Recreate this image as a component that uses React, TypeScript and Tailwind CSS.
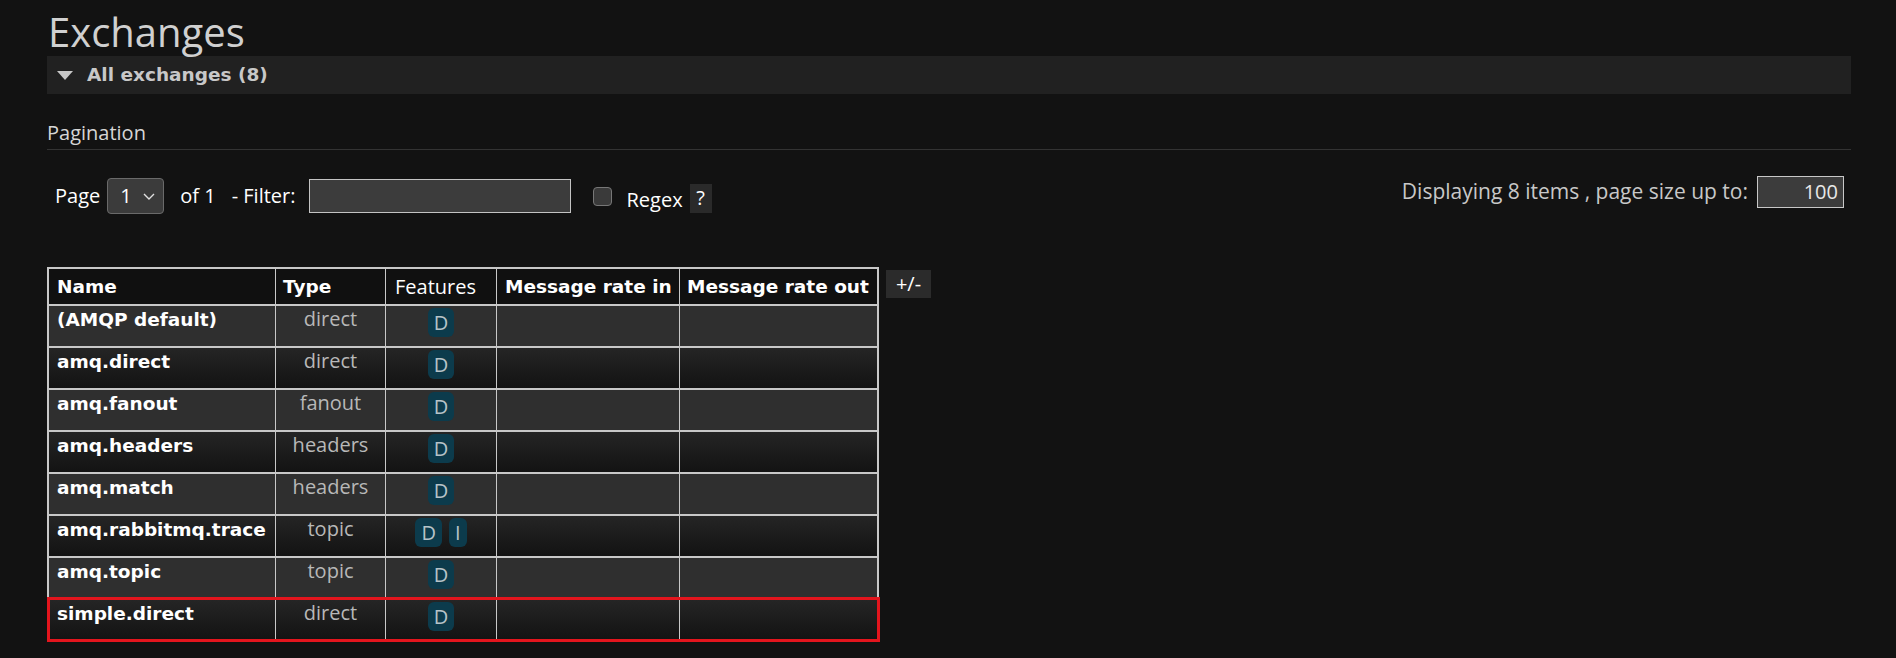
import React from "react";

type Row = { name: string; type: string; f: string[]; highlight?: boolean };

const rows: Row[] = [
  { name: "(AMQP default)", type: "direct", f: ["D"] },
  { name: "amq.direct", type: "direct", f: ["D"] },
  { name: "amq.fanout", type: "fanout", f: ["D"] },
  { name: "amq.headers", type: "headers", f: ["D"] },
  { name: "amq.match", type: "headers", f: ["D"] },
  { name: "amq.rabbitmq.trace", type: "topic", f: ["D", "I"] },
  { name: "amq.topic", type: "topic", f: ["D"] },
  { name: "simple.direct", type: "direct", f: ["D"], highlight: true },
];

const bold = "font-['DejaVu_Sans',sans-serif] font-bold text-[18.5px]";

function Badge({ t }: { t: string }) {
  return (
    <span className="inline-block h-[29px] px-[6px] rounded-[6px] bg-[#0c3b4c] text-[#b7c3c8] text-[20px] leading-[29px]">
      {t}
    </span>
  );
}

export default function App() {
  return (
    <div className="min-h-[658px] bg-[#121212] pl-[47px] pr-[45px] font-['Open_Sans',sans-serif] text-white">
      <h1 className="pt-[10px] leading-[44px] text-[40px] mb-[2px] text-[#d0d0d0] pl-[1px]">Exchanges</h1>
      <div className="h-[38px] bg-[#212121] flex items-center">
        <svg width="16" height="9" viewBox="0 0 16 9" className="ml-[10px]">
          <polygon points="0,0 16,0 8,9" fill="#c8c8c8" />
        </svg>
        <span className={`${bold} ml-[14px] text-[#c8c8c8]`}>All exchanges (8)</span>
      </div>
      <div className="mt-[27px] leading-[24px] text-[20px] pb-[4px] border-b border-[#333333] text-[#d6d6d6]">
        Pagination
      </div>
      <div className="mt-[26px] flex justify-between items-start">
        <div className="mt-[2px] h-[36px] flex items-center pl-[8px] text-[20px]">
          <span>Page</span>
          <div className="ml-[7px] w-[57px] h-[36px] rounded-[4px] border border-[#6a6a6a] bg-[#3b3b3b] flex items-center pl-[12px]">
            <span>1</span>
            <svg width="12" height="7" viewBox="0 0 12 7" className="ml-[11px]">
              <polyline points="1,1 6,6 11,1" fill="none" stroke="#e0e0e0" strokeWidth="1.4" />
            </svg>
          </div>
          <span className="ml-[16px]">of 1</span>
          <span className="ml-[16px]">- Filter:</span>
          <div className="ml-[14px] w-[262px] h-[34px] border border-[#c4c4c4] bg-[#3c3c3c]" />
          <div className="ml-[22px] w-[19px] h-[19px] rounded-[4px] border border-[#777777] bg-[#3a3a3a]" />
          <span className="ml-[14px] mt-[7px]">Regex</span>
          <span className="ml-[7px] w-[22px] h-[29px] mt-[4px] bg-[#2a2a2a] flex items-center justify-center">?</span>
        </div>
        <div className="h-[32px] flex items-center pr-[7px]">
          <span className="text-[21px] text-[#c8c8c8]">Displaying 8 items , page size up to:</span>
          <div className="ml-[9px] w-[87px] h-[32px] border border-[#c8c8c8] bg-[#3c3c3c] flex items-center justify-end pr-[5px] text-[20px] text-[#e8e8e8]">
            100
          </div>
        </div>
      </div>
      <div className="mt-[53px] flex items-start">
        <div className="flex flex-col border-t-2 border-l-2 border-[#c8c8c8]">
          <div className="flex h-[37px] bg-[#101010]">
            <div className={`w-[227px] h-[37px] border-r border-b-2 border-[#c8c8c8] pl-[8px] leading-[35px] ${bold}`}>Name</div>
            <div className={`w-[110px] h-[37px] border-r border-b-2 border-[#c8c8c8] pl-[7px] leading-[35px] ${bold}`}>Type</div>
            <div className="w-[111px] h-[37px] border-r border-b-2 border-[#c8c8c8] pl-[9px] leading-[35px] text-[20px]">Features</div>
            <div className={`w-[183px] h-[37px] border-r border-b-2 border-[#c8c8c8] pl-[8px] leading-[35px] ${bold}`}>Message rate in</div>
            <div className={`w-[199px] h-[37px] border-r-2 border-b-2 border-[#c8c8c8] pl-[7px] leading-[35px] ${bold}`}>Message rate out</div>
          </div>
          {rows.map((r, i) => (
            <div
              key={r.name}
              className={`relative flex h-[42px] ${i % 2 === 0 ? "bg-[#2f2f2f]" : "bg-gradient-to-b from-[#252525] to-[#121212]"}`}
            >
              <div className={`w-[227px] h-[42px] border-r border-b-2 border-[#c8c8c8] pl-[8px] pt-[2px] leading-[24px] ${bold}`}>{r.name}</div>
              <div className="w-[110px] h-[42px] border-r border-b-2 border-[#c8c8c8] pt-[1px] leading-[24px] text-[20px] text-center text-[#b8b8b8]">{r.type}</div>
              <div className="w-[111px] h-[42px] border-r border-b-2 border-[#c8c8c8] pt-[2px] flex justify-center items-start gap-[7px]">
                {r.f.map((t) => (
                  <Badge key={t} t={t} />
                ))}
              </div>
              <div className="w-[183px] h-[42px] border-r border-b-2 border-[#c8c8c8]" />
              <div className="w-[199px] h-[42px] border-r-2 border-b-2 border-[#c8c8c8]" />
              {r.highlight && (
                <div className="absolute top-[-3px] left-[-2px] right-[-1px] bottom-0 border-[3px] border-[#e3151d]" />
              )}
            </div>
          ))}
        </div>
        <div className="ml-[7px] mt-[3px] w-[45px] h-[28px] bg-[#2b2b2b] flex items-center justify-center text-[20px]">
          +/-
        </div>
      </div>
    </div>
  );
}
